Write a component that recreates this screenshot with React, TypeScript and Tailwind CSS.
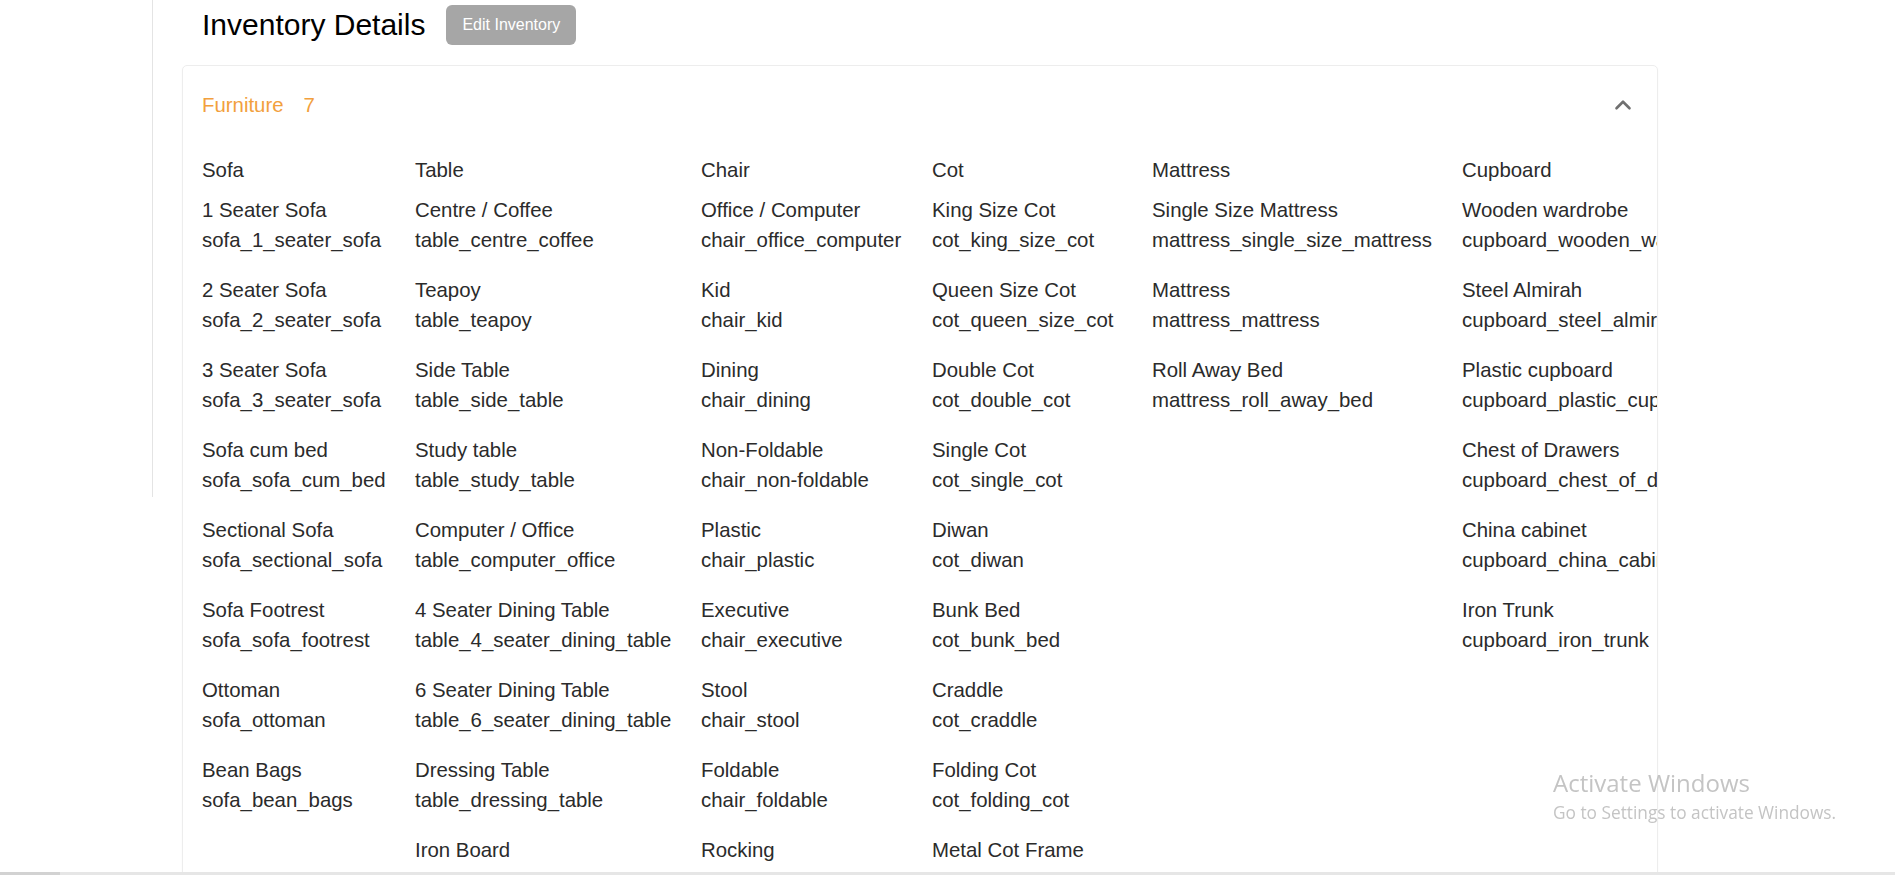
import { ChevronUp } from "lucide-react";

type Item = { name: string; code: string };
type Group = { title: string; width: string; items: Item[] };

const groups: Group[] = [
  {
    title: "Sofa",
    width: "w-[213px]",
    items: [
      { name: "1 Seater Sofa", code: "sofa_1_seater_sofa" },
      { name: "2 Seater Sofa", code: "sofa_2_seater_sofa" },
      { name: "3 Seater Sofa", code: "sofa_3_seater_sofa" },
      { name: "Sofa cum bed", code: "sofa_sofa_cum_bed" },
      { name: "Sectional Sofa", code: "sofa_sectional_sofa" },
      { name: "Sofa Footrest", code: "sofa_sofa_footrest" },
      { name: "Ottoman", code: "sofa_ottoman" },
      { name: "Bean Bags", code: "sofa_bean_bags" },
    ],
  },
  {
    title: "Table",
    width: "w-[286px]",
    items: [
      { name: "Centre / Coffee", code: "table_centre_coffee" },
      { name: "Teapoy", code: "table_teapoy" },
      { name: "Side Table", code: "table_side_table" },
      { name: "Study table", code: "table_study_table" },
      { name: "Computer / Office", code: "table_computer_office" },
      { name: "4 Seater Dining Table", code: "table_4_seater_dining_table" },
      { name: "6 Seater Dining Table", code: "table_6_seater_dining_table" },
      { name: "Dressing Table", code: "table_dressing_table" },
      { name: "Iron Board", code: "table_iron_board" },
    ],
  },
  {
    title: "Chair",
    width: "w-[231px]",
    items: [
      { name: "Office / Computer", code: "chair_office_computer" },
      { name: "Kid", code: "chair_kid" },
      { name: "Dining", code: "chair_dining" },
      { name: "Non-Foldable", code: "chair_non-foldable" },
      { name: "Plastic", code: "chair_plastic" },
      { name: "Executive", code: "chair_executive" },
      { name: "Stool", code: "chair_stool" },
      { name: "Foldable", code: "chair_foldable" },
      { name: "Rocking", code: "chair_rocking" },
    ],
  },
  {
    title: "Cot",
    width: "w-[220px]",
    items: [
      { name: "King Size Cot", code: "cot_king_size_cot" },
      { name: "Queen Size Cot", code: "cot_queen_size_cot" },
      { name: "Double Cot", code: "cot_double_cot" },
      { name: "Single Cot", code: "cot_single_cot" },
      { name: "Diwan", code: "cot_diwan" },
      { name: "Bunk Bed", code: "cot_bunk_bed" },
      { name: "Craddle", code: "cot_craddle" },
      { name: "Folding Cot", code: "cot_folding_cot" },
      { name: "Metal Cot Frame", code: "cot_metal_cot_frame" },
    ],
  },
  {
    title: "Mattress",
    width: "w-[310px]",
    items: [
      { name: "Single Size Mattress", code: "mattress_single_size_mattress" },
      { name: "Mattress", code: "mattress_mattress" },
      { name: "Roll Away Bed", code: "mattress_roll_away_bed" },
    ],
  },
  {
    title: "Cupboard",
    width: "w-[320px]",
    items: [
      { name: "Wooden wardrobe", code: "cupboard_wooden_wardrobe" },
      { name: "Steel Almirah", code: "cupboard_steel_almirah" },
      { name: "Plastic cupboard", code: "cupboard_plastic_cupboard" },
      { name: "Chest of Drawers", code: "cupboard_chest_of_drawers" },
      { name: "China cabinet", code: "cupboard_china_cabinet" },
      { name: "Iron Trunk", code: "cupboard_iron_trunk" },
    ],
  },
];

export default function App() {
  return (
    <div className="h-screen flex flex-col overflow-hidden bg-white font-['Liberation_Sans',Arial,sans-serif] text-[#2b2b2b]">
      <div className="flex-1 min-h-0 flex overflow-hidden">
        {/* sidebar edge */}
        <div className="w-[153px] shrink-0">
          <div className="h-[497px] border-r border-[#e4e4e4]" />
        </div>

        <div className="pl-[29px] shrink-0">
          <div className="h-[50px] flex items-center pl-[20px]">
            <h1 className="text-[30px] leading-[36px] text-black">Inventory Details</h1>
            <button className="ml-[21px] h-[40px] px-[16px] rounded-[6px] bg-[#a6a6a6] text-white text-[16px]">
              Edit Inventory
            </button>
          </div>

          <div className="mt-[15px] w-[1476px] border border-[#ededed] rounded-[5px] shadow-[0_1px_2px_rgba(0,0,0,0.04)] overflow-hidden">
            <div className="flex items-center justify-between pt-[24px] pl-[19px] pr-[21px]">
              <div className="flex text-[20.4px] leading-[30px] text-[#f2a03d]">
                <span>Furniture</span>
                <span className="ml-[20px]">7</span>
              </div>
              <ChevronUp className="w-[26px] h-[26px] text-[#707070]" strokeWidth={2.4} />
            </div>

            <div className="mt-[35px] pl-[19px] flex text-[20.4px] leading-[30px]">
              {groups.map((g) => (
                <div key={g.title} className={`${g.width} shrink-0 whitespace-nowrap`}>
                  <div className="mb-[10px]">{g.title}</div>
                  {g.items.map((it) => (
                    <div key={it.code} className="mb-[20px]">
                      <div>{it.name}</div>
                      <div>{it.code}</div>
                    </div>
                  ))}
                </div>
              ))}
            </div>
          </div>
        </div>
      </div>

      {/* horizontal scrollbar strip */}
      <div className="h-[3px] flex shrink-0">
        <div className="w-[60px] bg-[#d2d2d2]" />
        <div className="flex-1 bg-[#e6e6e6]" />
      </div>

      {/* windows watermark */}
      <div className="fixed left-[1553px] top-[768px] font-['Open_Sans',sans-serif] text-[#c4c4c4] pointer-events-none">
        <div className="text-[24px] leading-[30px]">Activate Windows</div>
        <div className="text-[17.3px] leading-[26px] mt-[2px]">Go to Settings to activate Windows.</div>
      </div>
    </div>
  );
}
